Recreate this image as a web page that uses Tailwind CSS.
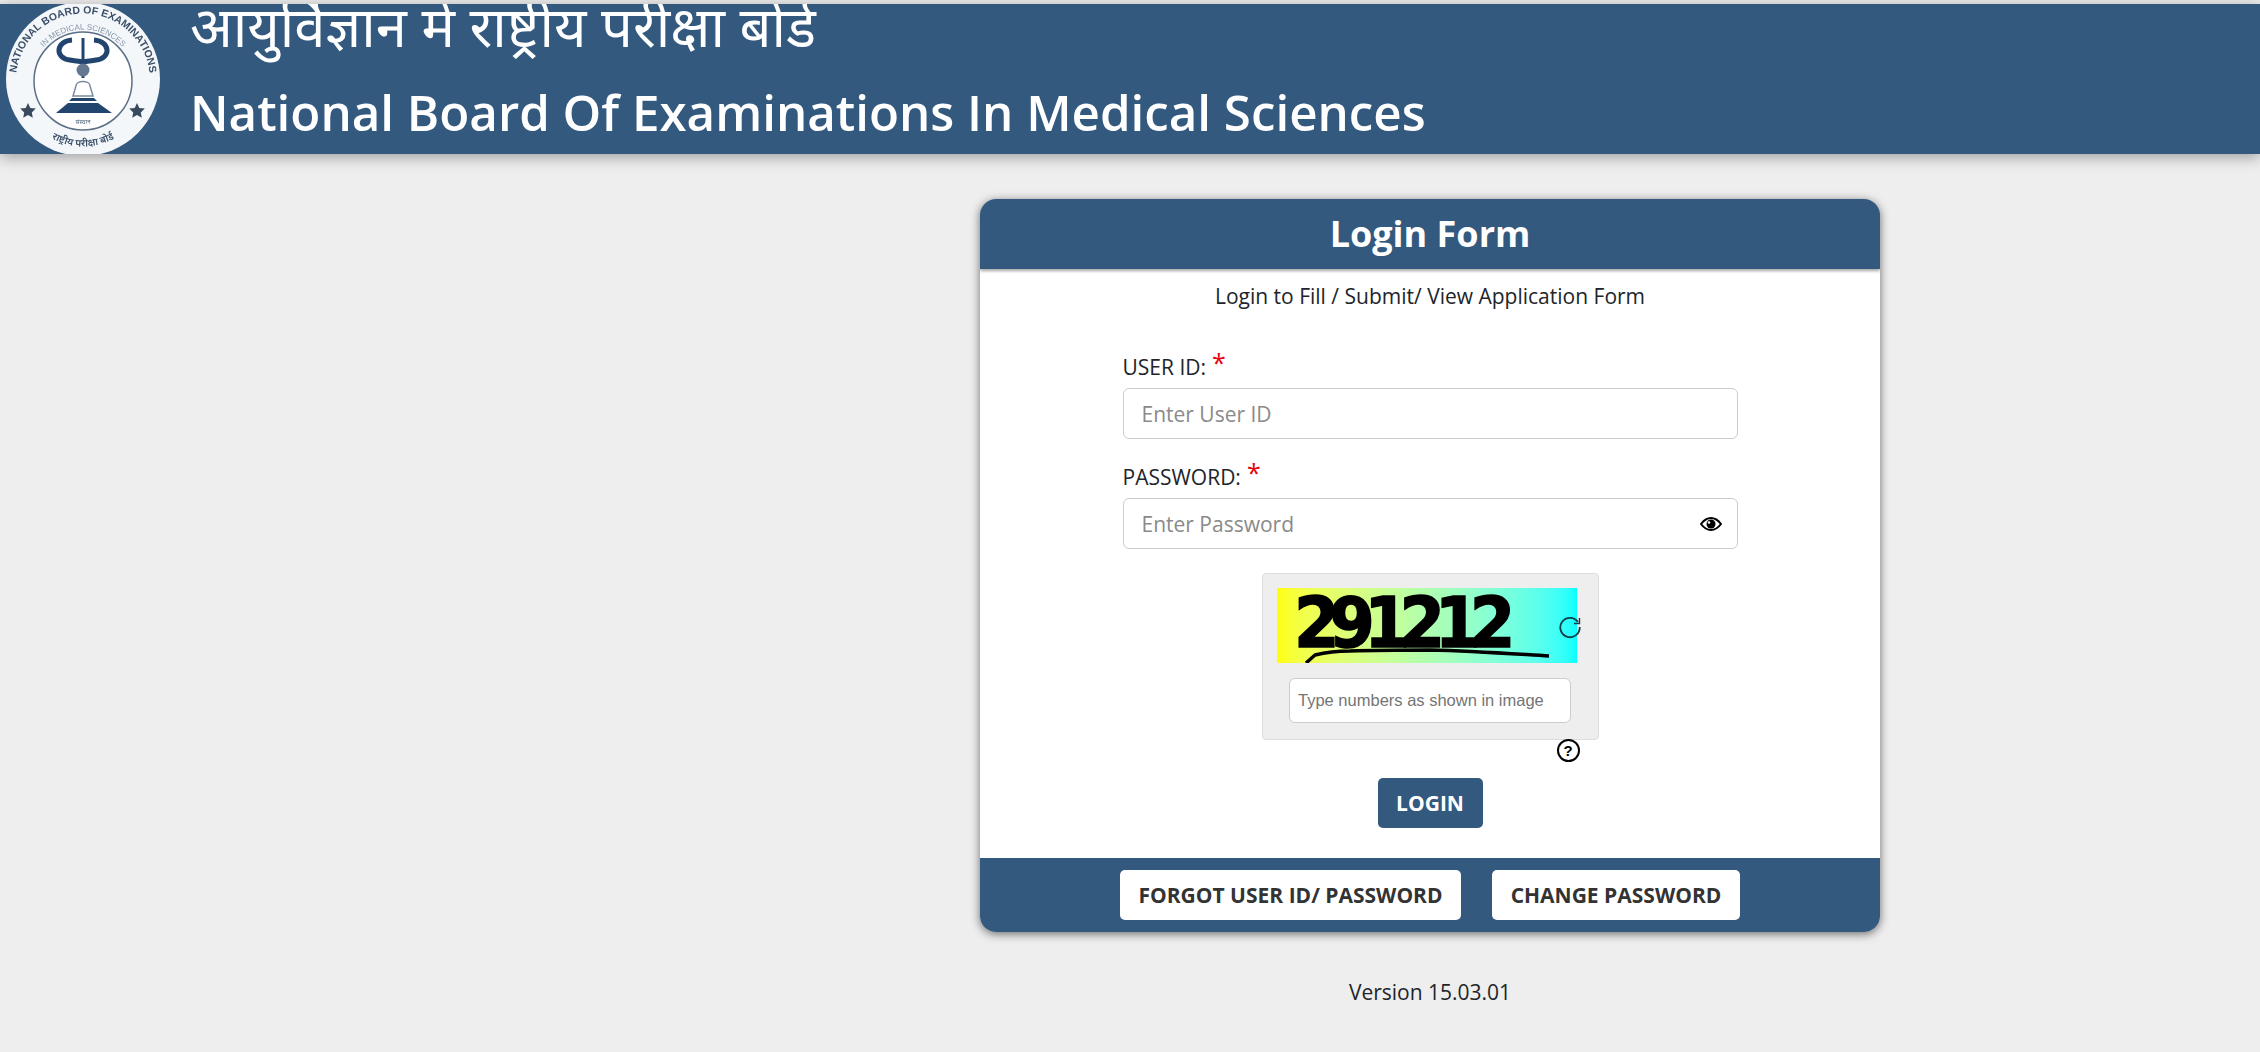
<!DOCTYPE html>
<html lang="en">
<head>
  <meta charset="UTF-8" />
  <title>National Board Of Examinations</title>
  <script src="https://cdn.jsdelivr.net/npm/@tailwindcss/browser@4"></script>
</head>
<body class="bg-[#eeeeee] text-[#212529] font-['Open_Sans',sans-serif] h-[1052px] overflow-hidden">

<!-- Header -->
<header class="mt-[4px] h-[150px] bg-[#34597f] shadow-[0_3px_14px_rgba(0,0,0,0.35)] flex items-start overflow-hidden">
  <svg class="shrink-0 blur-[0.5px]" width="165" height="150" viewBox="0 4 165 150">
    <circle cx="83" cy="79" r="77" fill="#f4f7fa"/>
    <path id="ring-outer" d="M17 92A67 67 0 1 1 149 92" fill="none"/>
    <text font-family="Liberation Sans, sans-serif" font-weight="700" font-size="10.500" fill="#3b4f68">
      <textPath href="#ring-outer" startOffset="50%" text-anchor="middle">NATIONAL BOARD OF EXAMINATIONS</textPath>
    </text>
    <circle cx="83" cy="81" r="49" fill="#fff" stroke="#5c6f86" stroke-width="1.500"/>
    <path id="ring-inner" d="M33 65A53 53 0 0 1 133 65" fill="none"/>
    <text font-family="Liberation Sans, sans-serif" font-size="8" fill="#8494a8">
      <textPath href="#ring-inner" startOffset="50%" text-anchor="middle">IN MEDICAL SCIENCES</textPath>
    </text>
    <path d="M72 40C56 41 54 58 70 60c5 1 9 1 13 2 4-1 8-1 13-2 16-2 14-19-2-20" fill="none" stroke="#21456f" stroke-width="5"/>
    <path d="M83 38v40" stroke="#21456f" stroke-width="3"/>
    <circle cx="83" cy="70" r="6.500" fill="#64788f"/>
    <path d="M76 86c0-6 14-6 14 0l3 10H73z" fill="none" stroke="#7a8a9e" stroke-width="1.500"/>
    <path d="M72 98h22l3 3H69zM68 103h30l14 10H56z" fill="#21456f"/>
    <path d="M28 103l2.300 5 5.500.6-4 3.800 1 5.400-4.800-2.700-4.800 2.700 1-5.400-4-3.800 5.500-.6zM137 103l2.300 5 5.500.6-4 3.800 1 5.400-4.800-2.700-4.800 2.700 1-5.400-4-3.800 5.500-.6z" fill="#3a4a5e"/>
    <text x="83" y="124" text-anchor="middle" font-family="Noto Sans, sans-serif" font-size="6" fill="#55677d">संस्थान</text>
    <path id="ring-bottom" d="M36 126A64 64 0 0 0 130 126" fill="none"/>
    <text font-family="Noto Sans, sans-serif" font-weight="600" font-size="10" fill="#3b4f68">
      <textPath href="#ring-bottom" startOffset="50%" text-anchor="middle">राष्ट्रीय परीक्षा बोर्ड</textPath>
    </text>
  </svg>
  <div class="ml-[25px] flex flex-col text-white blur-[0.4px]">
    <div class="-mt-[12px] text-[56px] leading-[66px] whitespace-nowrap font-['Noto_Sans',sans-serif]">आयुर्विज्ञान में राष्ट्रीय परीक्षा बोर्ड</div>
    <div class="mt-[24px] text-[49.250px] leading-[60px] font-semibold whitespace-nowrap">National Board Of Examinations In Medical Sciences</div>
  </div>
</header>

<main class="pl-[980px] flex flex-col items-start">
  <!-- Login card -->
  <section class="mt-[45px] w-[900px] h-[733px] bg-white rounded-[16px] shadow-[0_2px_10px_rgba(0,0,0,0.55)] flex flex-col overflow-hidden">
    <h1 class="h-[70px] shrink-0 bg-[#34597f] text-white text-[36px] font-bold flex items-center justify-center shadow-[0_2px_3px_rgba(0,0,0,0.35)]">Login Form</h1>
    <p class="mt-[12px] text-center text-[21px] leading-[30px]">Login to Fill / Submit/ View Application Form</p>

    <div class="mt-[41px] mx-auto w-[615px]">
      <label class="flex items-start h-[30px] text-[21px] leading-[30px]">USER ID:<span class="ml-[6px] -mt-[5px] text-red-600 text-[25px] leading-[30px]">*</span></label>
      <input class="mt-[6px] block w-full h-[51px] px-[18px] bg-white border border-[#cccccc] rounded-[6px] text-[21px] placeholder:text-[#8a8a8a]" placeholder="Enter User ID" />
      <label class="mt-[23px] flex items-start h-[30px] text-[21px] leading-[30px]">PASSWORD:<span class="ml-[6px] -mt-[5px] text-red-600 text-[25px] leading-[30px]">*</span></label>
      <div class="mt-[6px] relative">
        <input class="block w-full h-[51px] px-[18px] bg-white border border-[#cccccc] rounded-[6px] text-[21px] placeholder:text-[#8a8a8a]" placeholder="Enter Password" />
        <svg class="absolute right-[16px] top-[18px]" width="22" height="16" viewBox="0 0 22 16">
          <path d="M1 8c3-4 6-6 10-6s7 2 10 6c-3 4-6 6-10 6S4 12 1 8z" fill="none" stroke="#000" stroke-width="2"/>
          <circle cx="11" cy="8" r="4.500" fill="#000"/>
          <circle cx="9" cy="6.500" r="1.300" fill="#fff"/>
        </svg>
      </div>
    </div>

    <!-- Captcha -->
    <div class="relative mt-[24px] mx-auto w-[337px] h-[167px] shrink-0 bg-[#eeeeee] border border-[#dddddd] rounded-[4px] flex flex-col items-center">
      <div class="relative mt-[14px] ml-[14px] self-start w-[300px] h-[75px] bg-gradient-to-r from-[#ffff00] to-[#00ffff]">
        <span class="absolute left-[17px] -top-[2px] origin-left scale-x-[0.95] text-black text-[69px] leading-[75px] font-bold font-['DejaVu_Sans',sans-serif] tracking-[-11px] [-webkit-text-stroke:1.500px_#000]">291212</span>
        <svg class="absolute inset-0" width="300" height="75" viewBox="0 0 300 75">
          <path d="M29 75l9-8c12-3 25-4 35-4 30-1 60-1 80-1 45 1 85 4 119 6" fill="none" stroke="#000" stroke-width="3.500"/>
        </svg>
      </div>
      <svg class="absolute left-[295px] top-[41px]" width="24" height="24" viewBox="0 0 24 24" fill="none" stroke="#0e3f4a" stroke-width="1.800">
        <path d="M20 7A9.700 9.700 0 1 0 21.700 12"/>
        <path d="M21.500 3v5.500H16" stroke-width="1.400"/>
      </svg>
      <input class="mt-[15px] w-[282px] h-[45px] px-[8px] bg-white border border-[#cccccc] rounded-[6px] text-[16.500px] font-['Liberation_Sans',sans-serif] placeholder:text-[#757575]" placeholder="Type numbers as shown in image" />
    </div>
    <div class="relative mx-auto w-[337px] h-0">
      <span class="absolute left-[295px] -top-[1px] w-[23px] h-[23px] rounded-full border-2 border-black bg-white flex items-center justify-center text-[15px] font-bold leading-none text-black font-['Liberation_Sans',sans-serif]">?</span>
    </div>

    <button class="mt-[38px] mx-auto w-[105px] h-[50px] shrink-0 pt-[1px] bg-[#34597f] text-white rounded-[5px] text-[21px] font-bold">LOGIN</button>

    <footer class="mt-auto h-[74px] shrink-0 bg-[#34597f] flex items-start justify-center gap-[31px] pt-[12px]">
      <button class="h-[50px] w-[341px] pt-[1px] bg-white text-[#333333] rounded-[5px] text-[21px] font-bold whitespace-nowrap">FORGOT USER ID/ PASSWORD</button>
      <button class="h-[50px] w-[248px] pt-[1px] bg-white text-[#333333] rounded-[5px] text-[21px] font-bold whitespace-nowrap">CHANGE PASSWORD</button>
    </footer>
  </section>

  <p class="mt-[45px] w-[900px] text-center text-[21px] leading-[30px] text-[#212529]">Version 15.03.01</p>
</main>

</body>
</html>
